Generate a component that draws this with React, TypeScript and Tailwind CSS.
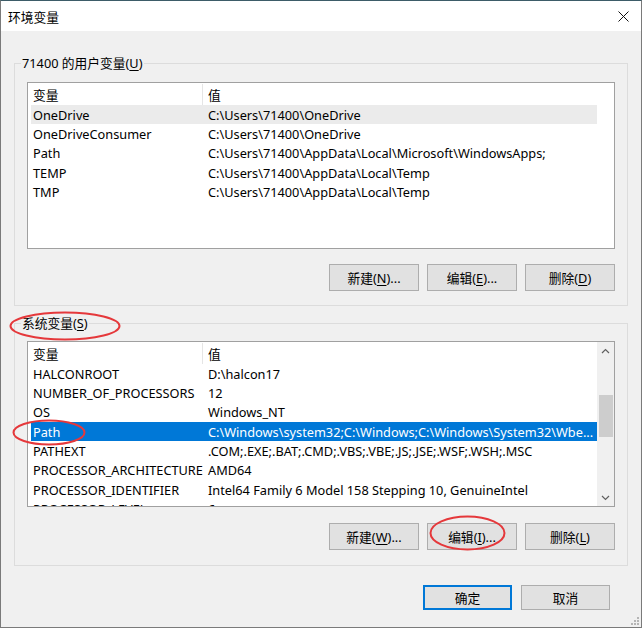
import React from 'react';

type Row = { name: string; value: string };

const userVars: Row[] = [
  { name: 'OneDrive', value: 'C:\\Users\\71400\\OneDrive' },
  { name: 'OneDriveConsumer', value: 'C:\\Users\\71400\\OneDrive' },
  { name: 'Path', value: 'C:\\Users\\71400\\AppData\\Local\\Microsoft\\WindowsApps;' },
  { name: 'TEMP', value: 'C:\\Users\\71400\\AppData\\Local\\Temp' },
  { name: 'TMP', value: 'C:\\Users\\71400\\AppData\\Local\\Temp' },
];

const systemVars: Row[] = [
  { name: 'HALCONROOT', value: 'D:\\halcon17' },
  { name: 'NUMBER_OF_PROCESSORS', value: '12' },
  { name: 'OS', value: 'Windows_NT' },
  { name: 'Path', value: 'C:\\Windows\\system32;C:\\Windows;C:\\Windows\\System32\\Wbe...' },
  { name: 'PATHEXT', value: '.COM;.EXE;.BAT;.CMD;.VBS;.VBE;.JS;.JSE;.WSF;.WSH;.MSC' },
  { name: 'PROCESSOR_ARCHITECTURE', value: 'AMD64' },
  { name: 'PROCESSOR_IDENTIFIER', value: 'Intel64 Family 6 Model 158 Stepping 10, GenuineIntel' },
  { name: 'PROCESSOR_LEVEL', value: '6' },
];

function Chevron({ up }: { up?: boolean }) {
  return (
    <svg width="9" height="6" viewBox="0 0 9 6">
      <path
        d={up ? 'M1 5 L4.5 1.5 L8 5' : 'M1 1 L4.5 4.5 L8 1'}
        fill="none"
        stroke="#606060"
        strokeWidth="1.2"
      />
    </svg>
  );
}

function VarList({
  rows,
  selected,
  hot,
  scroll,
  height,
}: {
  rows: Row[];
  selected?: number;
  hot?: number;
  scroll?: boolean;
  height: string;
}) {
  return (
    <div className={`flex border border-[#a0a0a0] bg-white ${height}`}>
      <div className="w-[569px] pl-[3px] pt-[1px] flex flex-col overflow-hidden">
        <div className="h-[21px] shrink-0 flex items-center">
          <div className="w-[172px] h-full pl-[2px] flex items-center border-r border-[#e5e5e5]">变量</div>
          <div className="pl-[5px]">值</div>
        </div>
        {rows.map((r, i) => (
          <div
            key={r.name}
            className={`h-[19.33px] shrink-0 flex items-center whitespace-nowrap ${
              i === selected ? 'bg-[#0078d7] text-white' : i === hot ? 'bg-[#ebebeb]' : ''
            }`}
          >
            <div className="w-[172px] shrink-0 pl-[2px] overflow-hidden">{r.name}</div>
            <div className="pl-[5px]">{r.value}</div>
          </div>
        ))}
      </div>
      {scroll && (
        <div className="w-[17px] flex flex-col bg-[#f0f0f0]">
          <div className="h-[17px] flex items-center justify-center">
            <Chevron up />
          </div>
          <div className="flex-1">
            <div className="mt-[36px] ml-[2px] mr-[1px] h-[42px] bg-[#cdcdcd]" />
          </div>
          <div className="h-[17px] flex items-center justify-center">
            <Chevron />
          </div>
        </div>
      )}
    </div>
  );
}

function WinButton({
  label,
  keyChar,
  dots,
  primary,
  size = 'w-[90px] h-[27px]',
}: {
  label: string;
  keyChar?: string;
  dots?: boolean;
  primary?: boolean;
  size?: string;
}) {
  return (
    <button
      className={`${size} flex items-center justify-center bg-[#e1e1e1] ${
        primary ? 'border-2 border-[#0078d7]' : 'border border-[#adadad]'
      }`}
    >
      <span>
        {label}
        {keyChar && (
          <>
            (<span className="underline underline-offset-2">{keyChar}</span>)
          </>
        )}
        {dots && '...'}
      </span>
    </button>
  );
}

function Ellipse({ className, w, h }: { className: string; w: number; h: number }) {
  return (
    <svg className={`absolute ${className}`} width={w} height={h} viewBox={`0 0 ${w} ${h}`}>
      <ellipse cx={w / 2} cy={h / 2} rx={w / 2 - 1.5} ry={h / 2 - 1.5} fill="none" stroke="#e5383b" strokeWidth="2" />
    </svg>
  );
}

export default function App() {
  return (
    <div className="relative w-[642px] h-[628px] flex flex-col bg-[#f0f0f0] border border-[#7a7a7a] border-t-[#3d5c68] text-[12.75px] leading-[16px] text-black font-['Noto_Sans','Noto_Sans_CJK_SC',sans-serif] overflow-hidden">
      <div className="h-[30px] shrink-0 bg-white flex items-center justify-between pl-[7px] pr-[12px] pt-[1px]">
        <span>环境变量</span>
        <svg width="11" height="11" viewBox="0 0 11 11">
          <path d="M0.5 0.5 L10.5 10.5 M10.5 0.5 L0.5 10.5" stroke="#111" strokeWidth="1" />
        </svg>
      </div>

      <div className="px-[13px] pt-[24px] flex flex-col">
        <fieldset className="border border-[#dcdcdc] px-[12px] pb-[14px]">
          <legend className="-ml-[6px] px-[1px] leading-[16px]">
            71400 的用户变量(<span className="underline underline-offset-2">U</span>)
          </legend>
          <div className="mt-[11px]">
            <VarList rows={userVars} hot={0} height="h-[167px]" />
          </div>
          <div className="mt-[15px] flex justify-end gap-[8px]">
            <WinButton label="新建" keyChar="N" dots />
            <WinButton label="编辑" keyChar="E" dots />
            <WinButton label="删除" keyChar="D" />
          </div>
        </fieldset>

        <fieldset className="mt-[9px] border border-[#dcdcdc] px-[12px] pb-[15px]">
          <legend className="-ml-[6px] px-[1px] leading-[16px]">
            系统变量(<span className="underline underline-offset-2">S</span>)
          </legend>
          <div className="mt-[10px]">
            <VarList rows={systemVars} selected={3} scroll height="h-[166px]" />
          </div>
          <div className="mt-[16px] flex justify-end gap-[8px]">
            <WinButton label="新建" keyChar="W" dots />
            <WinButton label="编辑" keyChar="I" dots />
            <WinButton label="删除" keyChar="L" />
          </div>
        </fieldset>

        <div className="mt-[19px] mr-[18px] flex justify-end gap-[9px]">
          <WinButton label="确定" primary size="w-[89px] h-[25px]" />
          <WinButton label="取消" size="w-[89px] h-[25px]" />
        </div>
      </div>

      <Ellipse className="left-[8px] top-[310px]" w={112} h={30} />
      <Ellipse className="left-[11px] top-[418px]" w={74} h={27} />
      <Ellipse className="left-[428px] top-[514px]" w={77} h={36} />

      <svg className="absolute right-[1px] bottom-[1px]" width="10" height="10" viewBox="0 0 10 10">
        <g fill="#b5b5b5">
          <rect x="7" y="1" width="2" height="2" />
          <rect x="4" y="4" width="2" height="2" />
          <rect x="7" y="4" width="2" height="2" />
          <rect x="1" y="7" width="2" height="2" />
          <rect x="4" y="7" width="2" height="2" />
          <rect x="7" y="7" width="2" height="2" />
        </g>
      </svg>
    </div>
  );
}
